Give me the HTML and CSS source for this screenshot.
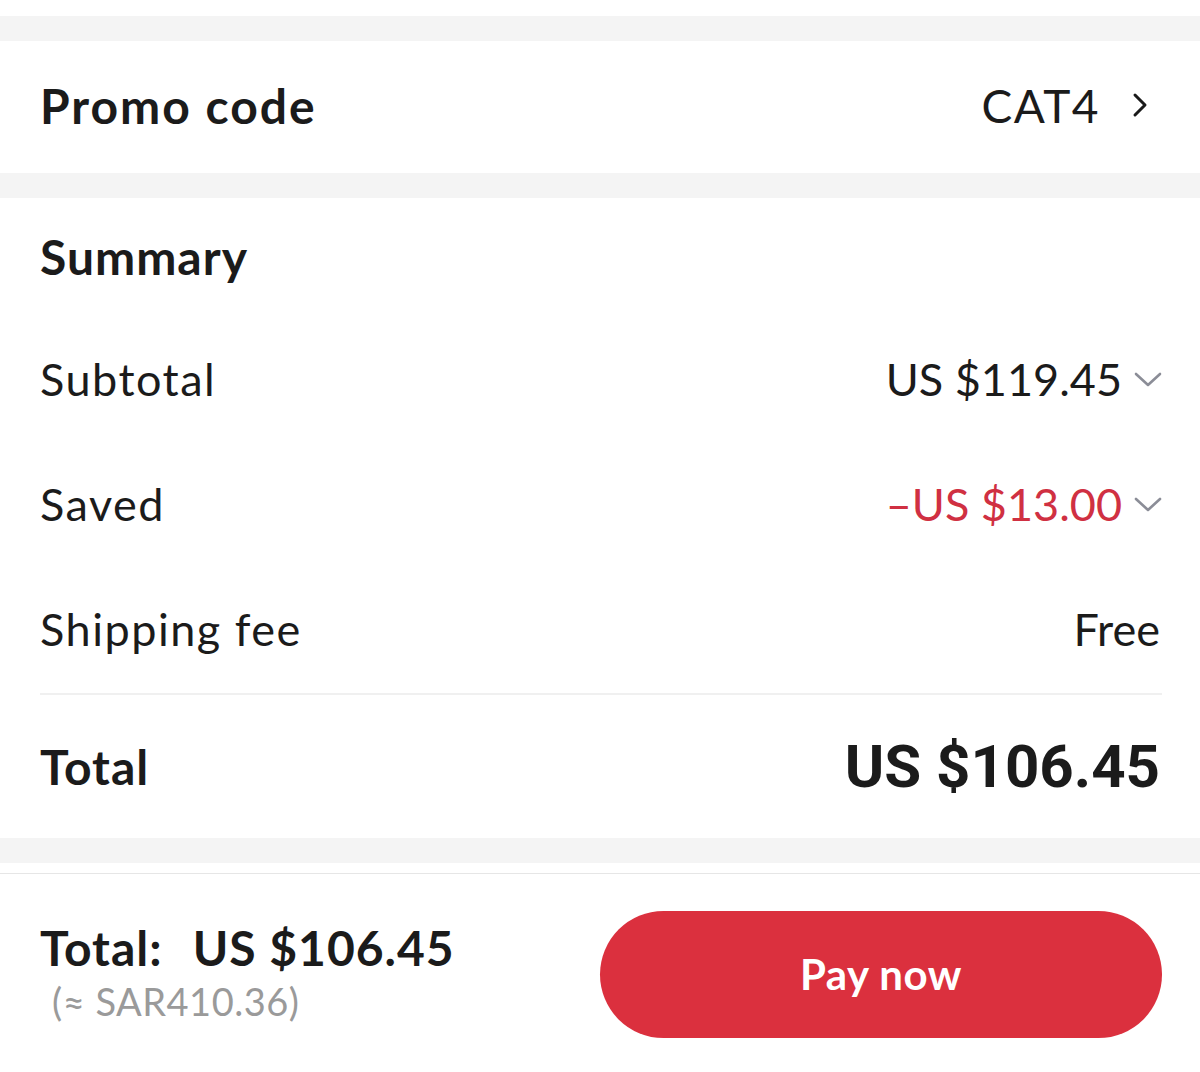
FILE: index.html
```html
<!DOCTYPE html>
<html lang="en">
<head>
<meta charset="utf-8">
<title>Checkout summary</title>
<link rel="stylesheet" href="styles.css">
</head>
<body>
<div class="page">
  <div class="top-space"></div>
  <div class="band"></div>
  <section class="promo">
    <span class="promo-label">Promo code</span>
    <span class="promo-value">CAT4
      <svg class="chev-right" width="16" height="26" viewBox="0 0 16 26"><path d="M3 3 L13 13 L3 23" fill="none" stroke="#1a1a1a" stroke-width="3" stroke-linecap="round" stroke-linejoin="round"/></svg>
    </span>
  </section>
  <div class="band"></div>
  <section class="summary">
    <div class="summary-head">Summary</div>
    <div class="row">
      <span class="label">Subtotal</span>
      <span class="value">US $119.45<svg class="chev-down" width="28" height="16" viewBox="0 0 28 16"><path d="M2 3 L14 14 L26 3" fill="none" stroke="#8b8d97" stroke-width="2.6" stroke-linecap="round" stroke-linejoin="round"/></svg></span>
    </div>
    <div class="row">
      <span class="label">Saved</span>
      <span class="value red">–US $13.00<svg class="chev-down" width="28" height="16" viewBox="0 0 28 16"><path d="M2 3 L14 14 L26 3" fill="none" stroke="#8b8d97" stroke-width="2.6" stroke-linecap="round" stroke-linejoin="round"/></svg></span>
    </div>
    <div class="row">
      <span class="label">Shipping fee</span>
      <span class="value">Free</span>
    </div>
    <div class="divider"></div>
    <div class="row total-row">
      <span class="total-label">Total</span>
      <span class="total-value">US $106.45</span>
    </div>
  </section>
  <div class="band"></div>
  <footer class="paybar">
    <div class="pay-left">
      <div class="pay-total"><span>Total:</span><span>US $106.45</span></div>
      <div class="pay-local">(≈ SAR410.36)</div>
    </div>
    <button class="pay-btn">Pay now</button>
  </footer>
</div>
</body>
</html>
```
FILE: styles.css
```css
* { box-sizing: border-box; }
html, body { margin: 0; padding: 0; background: #ffffff; }
body {
  font-family: Lato, "Noto Sans", "Liberation Sans", sans-serif;
  color: #1b1b1b;
}
.page { width: 1200px; }
.top-space { height: 16px; }
.band { height: 25px; background: #f4f4f4; }

.promo {
  height: 132px;
  padding: 0 52px 4px 40px;
  display: flex;
  align-items: center;
  justify-content: space-between;
}
.promo-label { font-size: 48px; font-weight: 700; letter-spacing: 2px; }
.promo-value {
  font-size: 46px;
  font-weight: 400;
  letter-spacing: 1.5px;
  display: flex;
  align-items: center;
  gap: 32px;
}
.chev-right { display: block; }

.summary { padding: 0 38px; }
.summary-head {
  height: 120px;
  display: flex;
  align-items: center;
  font-size: 48px;
  font-weight: 700;
  letter-spacing: 1px;
  padding: 0 0 4px 2px;
}
.row {
  height: 125px;
  display: flex;
  align-items: center;
  justify-content: space-between;
}
.label { font-size: 45px; font-weight: 400; letter-spacing: 1.5px; padding: 0 0 3px 2px; }
.value {
  font-size: 45px;
  font-weight: 400;
  display: flex;
  align-items: center;
  gap: 12px;
  padding: 0 2px 3px 0;
}
.value.red { color: #d03042; }
.chev-down { display: block; margin-right: -2px; }
.divider { height: 2px; background: #f0f0f0; margin: 0 0 0 2px; }
.total-row { height: 143px; }
.total-label { font-size: 48px; font-weight: 700; letter-spacing: 1px; padding-left: 2px; }
.total-value {
  font-family: Roboto, "Liberation Sans", sans-serif;
  font-size: 60px;
  font-weight: 700;
  padding-right: 2px;
}

.paybar {
  border-top: 1px solid #e6e6e6;
  margin-top: 10px;
  height: 199px;
  padding: 0 38px 0 40px;
  display: flex;
  align-items: center;
  justify-content: space-between;
}
.pay-left { display: flex; flex-direction: column; gap: 2px; margin-top: -4px; }
.pay-total {
  font-size: 48px;
  font-weight: 700;
  letter-spacing: 1px;
  display: flex;
  gap: 30px;
}
.pay-local {
  font-size: 38px;
  color: #9a9a9a;
  letter-spacing: 0.5px;
  padding-left: 12px;
}
.pay-btn {
  width: 562px;
  height: 127px;
  border: none;
  border-radius: 64px;
  background: #db303e;
  color: #ffffff;
  font-family: Lato, "Noto Sans", sans-serif;
  font-size: 42px;
  font-weight: 700;
  letter-spacing: 0.5px;
  margin-top: 2px;
}
```
